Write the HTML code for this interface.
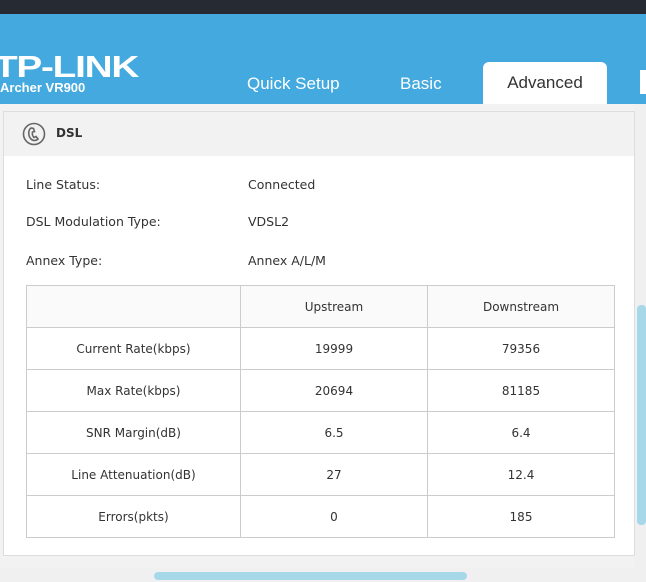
<!DOCTYPE html>
<html><head><meta charset="utf-8"><style>
*{margin:0;padding:0;box-sizing:border-box}
body{width:646px;height:582px;overflow:hidden;background:#f2f2f2;font-family:"DejaVu Sans","Liberation Sans",sans-serif;position:relative}
.top{position:absolute;left:0;top:0;width:646px;height:14px;background:#262b33}
.blue{position:absolute;left:0;top:14px;width:646px;height:90px;background:#43a9df}
.logo{position:absolute;left:-6px;top:49px;color:#fff;font-weight:bold;font-size:31px;letter-spacing:-1px;font-family:"Liberation Sans",sans-serif;transform:scaleX(1.25);transform-origin:0 0}
.model{position:absolute;left:0;top:80px;color:#fff;font-weight:bold;font-size:13px;font-family:"Liberation Sans",sans-serif}
.tab{position:absolute;top:74px;color:#fff;font-size:17px;font-family:"Liberation Sans",sans-serif}
.adv{position:absolute;left:483px;top:62px;width:124px;height:42px;background:#fff;border-radius:6px 6px 0 0;color:#333;font-size:17px;text-align:center;line-height:42px;font-family:"Liberation Sans",sans-serif}
.sq{position:absolute;left:640px;top:70px;width:8px;height:24px;background:#fff}
.panel{position:absolute;left:3px;top:111px;width:632px;height:445px;background:#fff;border:1px solid #ddd}
.ph{height:44px;background:#f2f2f2;position:relative}
.ph span{position:absolute;left:52px;top:14px;font-weight:bold;font-size:12px;color:#333}
.row{position:absolute;left:26px;font-size:12.5px;color:#333}
.val{position:absolute;left:248px;font-size:12.5px;color:#333}
table{position:absolute;left:26px;top:285px;border-collapse:collapse;width:589px}
td{border:1px solid #ccc;height:42px;text-align:center;font-size:12px;color:#333}
tr:first-child td{background:#fafafa}
.vtrack{position:absolute;left:635px;top:104px;width:11px;height:478px;background:#f0f0f0}
.vthumb{position:absolute;left:637px;top:305px;width:9px;height:220px;background:#a6d8ea;border-radius:4px}
.hbar{position:absolute;left:0;top:568px;width:635px;height:14px;background:#f0f0f0}
.hthumb{position:absolute;left:154px;top:572px;width:313px;height:8px;background:#a6d8ea;border-radius:4px}
</style></head><body>
<div class="top"></div>
<div class="blue"></div>
<div class="logo">TP-LINK</div>
<div class="model">Archer VR900</div>
<div class="tab" style="left:247px">Quick Setup</div>
<div class="tab" style="left:400px">Basic</div>
<div class="adv">Advanced</div>
<div class="sq"></div>
<div class="vtrack"></div><div class="vthumb"></div>
<div class="panel">
<div class="ph">
<svg style="position:absolute;left:18px;top:10px" width="24" height="24" viewBox="0 0 24 24" fill="none" stroke="#666" stroke-width="1.6"><circle cx="12" cy="12" r="10.5"/><path d="M9 6 C6 8 6 14 9 17 C11 19 14 19 16 17 L14 14.5 L12 15.5 C10.5 14 10 12 10.5 10 L12.5 9.5 L11.5 6.5 Z"/></svg>
<span>DSL</span></div>
</div>
<div class="row" style="top:177px">Line Status:</div><div class="val" style="top:177px">Connected</div>
<div class="row" style="top:214px">DSL Modulation Type:</div><div class="val" style="top:214px">VDSL2</div>
<div class="row" style="top:253px">Annex Type:</div><div class="val" style="top:253px">Annex A/L/M</div>
<table>
<tr><td style="width:214px"></td><td style="width:187px">Upstream</td><td>Downstream</td></tr>
<tr><td>Current Rate(kbps)</td><td>19999</td><td>79356</td></tr>
<tr><td>Max Rate(kbps)</td><td>20694</td><td>81185</td></tr>
<tr><td>SNR Margin(dB)</td><td>6.5</td><td>6.4</td></tr>
<tr><td>Line Attenuation(dB)</td><td>27</td><td>12.4</td></tr>
<tr><td>Errors(pkts)</td><td>0</td><td>185</td></tr>
</table>
<div class="hbar"></div><div class="hthumb"></div>
</body></html>
